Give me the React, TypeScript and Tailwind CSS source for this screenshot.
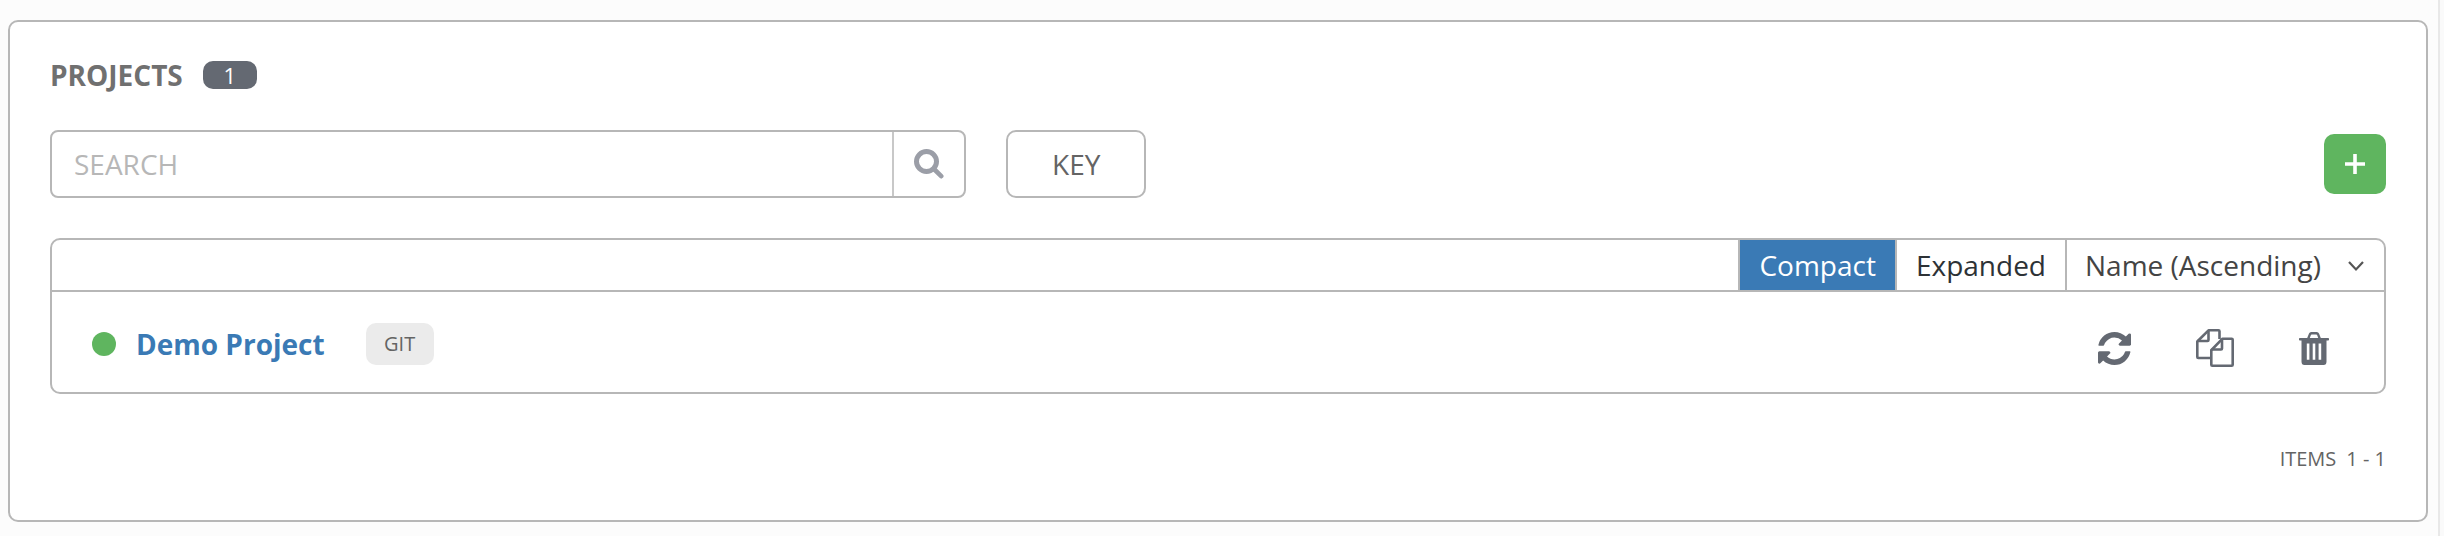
import React, { useState } from 'react';

type View = 'compact' | 'expanded';

interface IconProps {
  className?: string;
}

const SearchIcon: React.FC<IconProps> = ({ className }) => (
  <svg viewBox="0 0 30 30" className={className} fill="none" stroke="currentColor" aria-hidden="true">
    <circle cx="12.5" cy="12.5" r="10" strokeWidth="5" />
    <path d="M20 20l7.2 7.2" strokeWidth="4.6" strokeLinecap="round" />
  </svg>
);

const PlusIcon: React.FC<IconProps> = ({ className }) => (
  <svg viewBox="0 0 20 20" className={className} fill="none" stroke="currentColor" strokeWidth="3.6" aria-hidden="true">
    <path d="M10 0v20M0 10h20" />
  </svg>
);

const ChevronIcon: React.FC<IconProps> = ({ className }) => (
  <svg viewBox="0 0 16 16" className={className} fill="none" stroke="currentColor" strokeWidth="2.2" aria-hidden="true">
    <path d="M1 4l7 7.500l7-7.500" />
  </svg>
);

const RefreshIcon: React.FC<IconProps> = ({ className }) => (
  <svg viewBox="0 0 1536 1536" className={className} fill="currentColor" aria-hidden="true">
    <path d="M1511 928q0 5-1 7-64 268-268 434.5t-478 166.500q-146 0-282.500-55t-243.500-157l-129 129q-19 19-45 19t-45-19-19-45v-448q0-26 19-45t45-19h448q26 0 45 19t19 45-19 45l-137 137q71 66 161 102t187 36q134 0 250-65t186-179q11-17 53-117 8-23 30-23h192q13 0 22.500 9.500t9.500 22.500zm25-800v448q0 26-19 45t-45 19h-448q-26 0-45-19t-19-45 19-45l138-138q-148-137-349-137-134 0-250 65t-186 179q-11 17-53 117-8 23-30 23h-199q-13 0-22.500-9.500t-9.500-22.500v-7q65-268 270-434.500t480-166.500q146 0 284 55.500t245 156.500l130-129q19-19 45-19t45 19 19 45z" />
  </svg>
);

const CopyIcon: React.FC<IconProps> = ({ className }) => (
  <svg viewBox="0 0 38 38" className={className} fill="none" stroke="currentColor" strokeWidth="2.6" strokeLinejoin="round" aria-hidden="true">
    <path d="M14.500 29H2.300q-1 0-1-1V12.500L12.500 1.300H22.500q1 0 1 1V10" />
    <path d="M1.500 12H11.500q1 0 1-1V1.500" />
    <path d="M15.500 21L26.500 9.700H35.700q1 0 1 1V35.700q0 1-1 1H16.300q-1 0-1-1V21z" />
    <path d="M15.500 20.500H25q1 0 1-1V10" />
  </svg>
);

const TrashIcon: React.FC<IconProps> = ({ className }) => (
  <svg viewBox="0 0 30 33" className={className} fill="currentColor" aria-hidden="true">
    <path
      fillRule="evenodd"
      d="M8.200 6L10 1.500Q10.600 0 12.200 0h5.600q1.600 0 2.200 1.500L21.800 6H29.200q.8 0 .8.800v1q0 .8-.8.800H27.500V29.500q0 3.500-3 3.500h-19q-3 0-3-3.500V8.600H.8q-.8 0-.8-.8v-1Q0 6 .8 6zM10.800 6h8.400l-1-2.800q-.2-.8-1-.8h-4.400q-.8 0-1 .8zM7.800 11.500v16.200h2.600V11.500zM13.700 11.500v16.200h2.600V11.500zM19.600 11.500v16.200h2.600V11.500z"
    />
  </svg>
);

interface ViewButtonProps {
  label: string;
  active: boolean;
  onClick: () => void;
}

const ViewButton: React.FC<ViewButtonProps> = ({ label, active, onClick }) => (
  <button
    type="button"
    onClick={onClick}
    aria-pressed={active}
    className={`border-r-2 border-[#b7b7b7] px-[19px] ${active ? 'bg-[#3a7ab5] text-white' : 'text-[#2d3236]'}`}
  >
    {label}
  </button>
);

const App: React.FC = () => {
  const [view, setView] = useState<View>('compact');
  const [search, setSearch] = useState('');

  return (
    <div className="flex min-h-screen bg-[#fcfcfc] font-['Open_Sans',sans-serif] text-[28px] leading-9 text-[#646464]">
      <main className="flex-1 pt-5 pr-2.5 pb-3.5 pl-2">
        <section className="rounded-[10px] border-2 border-[#b7b7b7] bg-white px-10 pt-[35px] pb-[43px]">
          <header className="flex items-center gap-5">
            <h1 className="font-bold text-[#707070]">PROJECTS</h1>
            <span className="flex h-7 w-[54px] items-center justify-center rounded-[10px] bg-[#646972] text-[22px] text-white">
              1
            </span>
          </header>

          <div className="mt-[37px] flex items-center">
            <form
              role="search"
              onSubmit={(e) => e.preventDefault()}
              className="flex h-[68px] w-[39.222%] overflow-hidden rounded-lg border-2 border-[#b7b7b7]"
            >
              <input
                type="text"
                aria-label="Search"
                placeholder="SEARCH"
                value={search}
                onChange={(e) => setSearch(e.target.value)}
                className="min-w-0 flex-1 px-[22px] outline-none placeholder:text-[#b7b7b7]"
              />
              <button
                type="submit"
                aria-label="Run search"
                className="flex w-[72px] items-center justify-center border-l-2 border-[#c8c8c8] text-[#9b9ea7]"
              >
                <SearchIcon className="size-[30px]" />
              </button>
            </form>
            <button type="button" className="ml-10 h-[68px] w-[140px] rounded-[10px] border-2 border-[#b7b7b7]">
              KEY
            </button>
            <button
              type="button"
              aria-label="Add project"
              className="ml-auto flex h-[60px] w-[62px] items-center justify-center rounded-[10px] bg-[#5fb55f] text-white"
            >
              <PlusIcon className="size-5" />
            </button>
          </div>

          <div className="mt-10 overflow-hidden rounded-[10px] border-2 border-[#b7b7b7]">
            <div className="flex h-[52px] justify-end border-b-2 border-[#b7b7b7]">
              <div className="flex border-l-2 border-[#b7b7b7]">
                <ViewButton label="Compact" active={view === 'compact'} onClick={() => setView('compact')} />
                <ViewButton label="Expanded" active={view === 'expanded'} onClick={() => setView('expanded')} />
              </div>
              <div className="relative flex">
                <select
                  aria-label="Sort projects"
                  defaultValue="name-asc"
                  className="appearance-none pr-[62px] pl-[18px] text-[#444]"
                >
                  <option value="name-asc">Name (Ascending)</option>
                </select>
                <ChevronIcon className="pointer-events-none absolute top-[18px] right-5 size-4 text-[#555]" />
              </div>
            </div>

            <ul>
              <li className="flex h-[100px] items-center pt-1 pr-[55px] pl-10">
                <span className="size-6 rounded-full bg-[#5fb55f]" />
                <a href="#demo-project" className="ml-5 font-bold text-[#3a7ab5]">
                  Demo Project
                </a>
                <span className="ml-[41px] flex h-[42px] w-[68px] items-center justify-center rounded-[10px] bg-[#ebebeb] text-xl">
                  GIT
                </span>
                <div className="mt-2 ml-auto flex items-center gap-[65px] text-[#646972]">
                  <button type="button" aria-label="Update project">
                    <RefreshIcon className="size-[33px]" />
                  </button>
                  <button type="button" aria-label="Copy project">
                    <CopyIcon className="size-[38px]" />
                  </button>
                  <button type="button" aria-label="Delete project">
                    <TrashIcon className="h-[33px] w-[30px]" />
                  </button>
                </div>
              </li>
            </ul>
          </div>

          <footer className="mt-[47px] flex justify-end gap-2.5 text-xl leading-9">
            <span>ITEMS</span>
            <span>1 - 1</span>
          </footer>
        </section>
      </main>
      <div className="w-1.5 border-l-2 border-[#e8e8e8] bg-[#fafafa]" />
    </div>
  );
};

export default App;
